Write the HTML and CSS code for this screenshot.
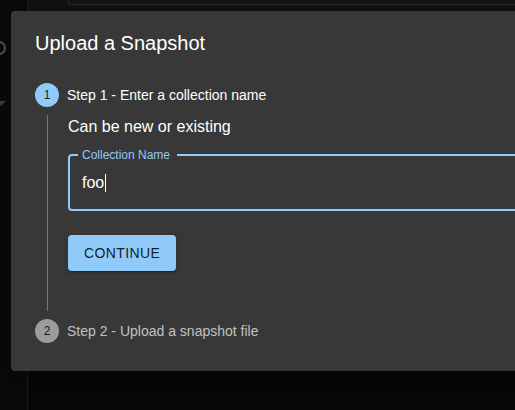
FILE: index.html
```html
<!DOCTYPE html>
<html lang="en">
<head>
<meta charset="utf-8">
<title>Upload a Snapshot</title>
<link rel="stylesheet" href="styles.css">
</head>
<body>
<div class="app">
  <aside class="sidebar">
    <svg class="side-icon ring" width="20" height="20" viewBox="0 0 20 20"><circle cx="10" cy="10" r="6" fill="none" stroke="#4a4a4a" stroke-width="2.4"/></svg>
    <svg class="side-icon tri" width="14" height="8" viewBox="0 0 14 8"><path d="M2 1 L12 1 L7 6 Z" fill="#3a3a3a"/></svg>
  </aside>
  <main class="main">
    <div class="topbar"><div class="topbox"></div></div>
  </main>
</div>
<div class="dialog">
  <h2 class="title">Upload a Snapshot</h2>
  <div class="stepper">
    <div class="step">
      <div class="step-label">
        <span class="step-icon active">1</span>
        <span class="label-text active">Step 1 - Enter a collection name</span>
      </div>
      <div class="step-content">
        <p class="hint">Can be new or existing</p>
        <fieldset class="field">
          <legend class="field-label">Collection Name</legend>
          <div class="field-input"><span class="value">foo</span><span class="caret"></span></div>
        </fieldset>
        <button class="btn" type="button">CONTINUE</button>
      </div>
    </div>
    <div class="step">
      <div class="step-label">
        <span class="step-icon">2</span>
        <span class="label-text">Step 2 - Upload a snapshot file</span>
      </div>
    </div>
  </div>
</div>
</body>
</html>
```

FILE: styles.css
```css
* { box-sizing: border-box; }
html, body {
  margin: 0;
  padding: 0;
  width: 515px;
  height: 410px;
  overflow: hidden;
  background: #070707;
  font-family: "Liberation Sans", Arial, sans-serif;
}
.app {
  display: flex;
  height: 410px;
}
.sidebar {
  width: 28px;
  flex: none;
  background: #0a0a0a;
  border-right: 1px solid #1c1c1c;
  display: flex;
  flex-direction: column;
  overflow: hidden;
}
.side-icon { display: block; margin-left: -11px; }
.ring { margin-top: 38px; }
.tri { margin-top: 42px; margin-left: -6px; }
.main {
  flex: 1;
  background: #070707;
}
.topbar {
  height: 11px;
  background: #111111;
  padding-left: 40px;
}
.topbox {
  height: 5px;
  background: #141414;
  border-left: 1px solid #2a2a2a;
  border-bottom: 1px solid #2a2a2a;
  border-bottom-left-radius: 4px;
}
.dialog {
  position: absolute;
  left: 11px;
  top: 11px;
  width: 620px;
  background: #383838;
  border-radius: 4px;
  color: #ffffff;
  padding-bottom: 20px;
  box-shadow: 0 11px 15px -7px rgba(0,0,0,0.2), 0 24px 38px 3px rgba(0,0,0,0.14);
}
.title {
  margin: 0;
  padding: 16px 24px;
  font-size: 20px;
  font-weight: 400;
  line-height: 32px;
}
.stepper {
  padding: 0 24px;
}
.step-label {
  display: flex;
  align-items: center;
  padding: 8px 0;
}
.step-icon {
  width: 24px;
  height: 24px;
  border-radius: 50%;
  background: #9c9c9c;
  color: rgba(0,0,0,0.87);
  font-size: 12px;
  line-height: 24px;
  text-align: center;
  flex: none;
}
.step-icon.active { background: #90caf9; }
.label-text {
  margin-left: 8px;
  font-size: 14px;
  line-height: 20px;
  color: rgba(255,255,255,0.7);
}
.label-text.active { color: #ffffff; }
.step-content {
  margin-left: 12px;
  border-left: 1px solid #757575;
  padding-left: 20px;
  padding-bottom: 40px;
}
.hint {
  margin: 0;
  font-size: 16px;
  line-height: 24px;
}
.field {
  margin: 9px 0 0;
  width: 560px;
  border: 2px solid #90caf9;
  border-radius: 4px;
  padding: 9px 12px 14px;
  min-width: 0;
}
.field-label {
  margin-left: -4px;
  padding: 0 7px 0 4px;
  font-size: 12px;
  line-height: 14px;
  color: #90caf9;
}
.field-input {
  display: flex;
  align-items: center;
  height: 24px;
  font-size: 16px;
}
.value { line-height: 24px; }
.caret {
  width: 1px;
  height: 18px;
  background: #ffffff;
  margin-left: 1px;
}
.btn {
  display: block;
  margin-top: 24px;
  height: 36px;
  width: 108px;
  padding: 0 16px;
  border: none;
  border-radius: 4px;
  background: #90caf9;
  color: rgba(0,0,0,0.87);
  font-family: "Liberation Sans", Arial, sans-serif;
  font-size: 14px;
  letter-spacing: 0.4px;
  text-align: left;
  box-shadow: 0 3px 1px -2px rgba(0,0,0,0.2), 0 2px 2px 0 rgba(0,0,0,0.14), 0 1px 5px 0 rgba(0,0,0,0.12);
}
```
